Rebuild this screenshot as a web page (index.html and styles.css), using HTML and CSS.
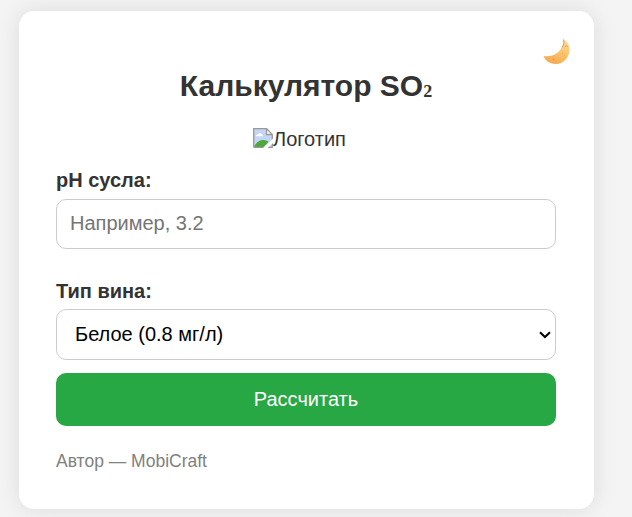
FILE: index.html
```html
<!DOCTYPE html>
<html lang="ru">
<head>
<meta charset="utf-8">
<title>Калькулятор SO₂</title>
<link rel="stylesheet" href="styles.css">
</head>
<body>
<main class="card">
  <button class="theme-toggle" type="button">
    <svg width="28" height="26" viewBox="0 0 28 26">
      <defs>
        <linearGradient id="moon" x1="0.8" y1="0" x2="0.4" y2="1">
          <stop offset="0" stop-color="#ffd99a"/>
          <stop offset="0.5" stop-color="#fbc56d"/>
          <stop offset="1" stop-color="#f4aa50"/>
        </linearGradient>
      </defs>
      <path d="M20.3 0.2C24.6 2.4 27.1 6.6 26.6 11.5C26 19.3 19.8 25 12.6 24.9C6.6 24.8 2.2 21.6 .6 17C4 17.6 8.8 17.2 12.8 14.8C18 11.6 21 6 20.3 0.2Z" fill="url(#moon)"/>
      <path d="M20.4 .4C21.3 3.2 20.6 6.2 19.3 8.5" fill="none" stroke="#c98a5a" stroke-width=".7"/>
      <path d="M21.8 7.5l2-.8 1 1.2M18.8 13.5l1.3 1.1M9.3 19.8l2 .2-.8 1.3M21.5 16.5l.8.6" fill="none" stroke="#dd9548" stroke-width="0.8"/>
    </svg>
  </button>
  <h1 class="title">Калькулятор SO<span class="index">₂</span></h1>
  <div class="logo">
    <svg class="logo-icon" width="20" height="20" viewBox="0 0 20 20">
      <path d="M1 1H13.5L19 6.5V19H1Z" fill="#c5d5f5"/>
      <path d="M3 8.2C3 6.7 4.3 6.4 5 6.5C5.6 4.6 8.4 4.8 8.7 6.5C10 6.5 10.2 8.2 10 8.2Z" fill="#fff"/>
      <path d="M1 18.8C3 14.5 7 11.8 10.5 12C13 12.1 14.6 13 15.5 14L10.5 19H1Z" fill="#4ea83c"/>
      <path d="M13.5 1V6.5H19Z" fill="#fff"/>
      <path d="M19.3 6.5H13.5V.7M.7 19.3V.7H13.6L19.3 6.4V19.3H.7" fill="none" stroke="#999" stroke-width="1.3"/>
      <path d="M20 10.5L10.2 20H14.5L20 15Z" fill="#fff"/>
    </svg><span>Логотип</span>
  </div>
  <label class="label" for="ph">pH сусла:</label>
  <input class="field" id="ph" type="text" placeholder="Например, 3.2">
  <label class="label label-wine" for="wine">Тип вина:</label>
  <div class="select-wrap">
    <select class="field select" id="wine">
      <option>Белое (0.8 мг/л)</option>
    </select>
    <svg class="chevron" width="12" height="8" viewBox="0 0 12 8"><path d="M1 1.2L6 6L11 1.2" fill="none" stroke="#000" stroke-width="2"/></svg>
  </div>
  <button class="submit" type="button">Рассчитать</button>
  <footer class="footer">Автор — MobiCraft</footer>
</main>
</body>
</html>
```
FILE: styles.css
```css
* { box-sizing: border-box; }
body {
  margin: 0;
  height: 517px;
  overflow: hidden;
  background: #f4f4f4;
  color: #333;
  font: 20px/23px "Liberation Sans", Arial, sans-serif;
}
.card {
  position: relative;
  width: 575px;
  height: 498px;
  margin: 11px 0 0 19px;
  padding: 58px 38px 0 37px;
  background: #fff;
  border-radius: 15px;
  box-shadow: 0 0 25px rgba(0, 0, 0, 0.1);
  display: flow-root;
}
.theme-toggle {
  position: absolute;
  top: 28px;
  right: 23px;
  padding: 0;
  border: 0;
  background: none;
  line-height: 0;
}
.title {
  margin: 0;
  font-size: 30px;
  line-height: 34px;
  text-align: center;
}
.index {
  font-family: "Liberation Serif", serif;
  line-height: 0;
  vertical-align: 5px;
}
.logo {
  display: flex;
  width: 94px;
  height: 23px;
  margin: 25px 0 0 197px;
}
.logo-icon { flex: none; }
.label {
  display: block;
  margin-top: 18px;
  font-weight: bold;
}
.field {
  display: block;
  width: 100%;
  height: 50px;
  margin: 7px 0 0;
  padding: 0 13px 2px;
  border: 1px solid #ccc;
  border-radius: 10px;
  background: #fff;
  font: inherit;
}
.field::placeholder { color: #757575; }
.label-wine { margin-top: 31px; }
.select-wrap { position: relative; margin-top: 6px; }
.select {
  height: 51px;
  margin: 0;
  padding: 0 18px;
  appearance: none;
  color: #000;
}
.chevron { position: absolute; right: 5px; top: 22px; }
.submit {
  display: block;
  width: 100%;
  height: 53px;
  margin-top: 13px;
  border: 0;
  border-radius: 10px;
  background: #28a745;
  color: #fff;
  font: inherit;
}
.footer {
  margin-top: 25px;
  color: #808080;
  font-size: 17.5px;
  line-height: 20px;
}
```
